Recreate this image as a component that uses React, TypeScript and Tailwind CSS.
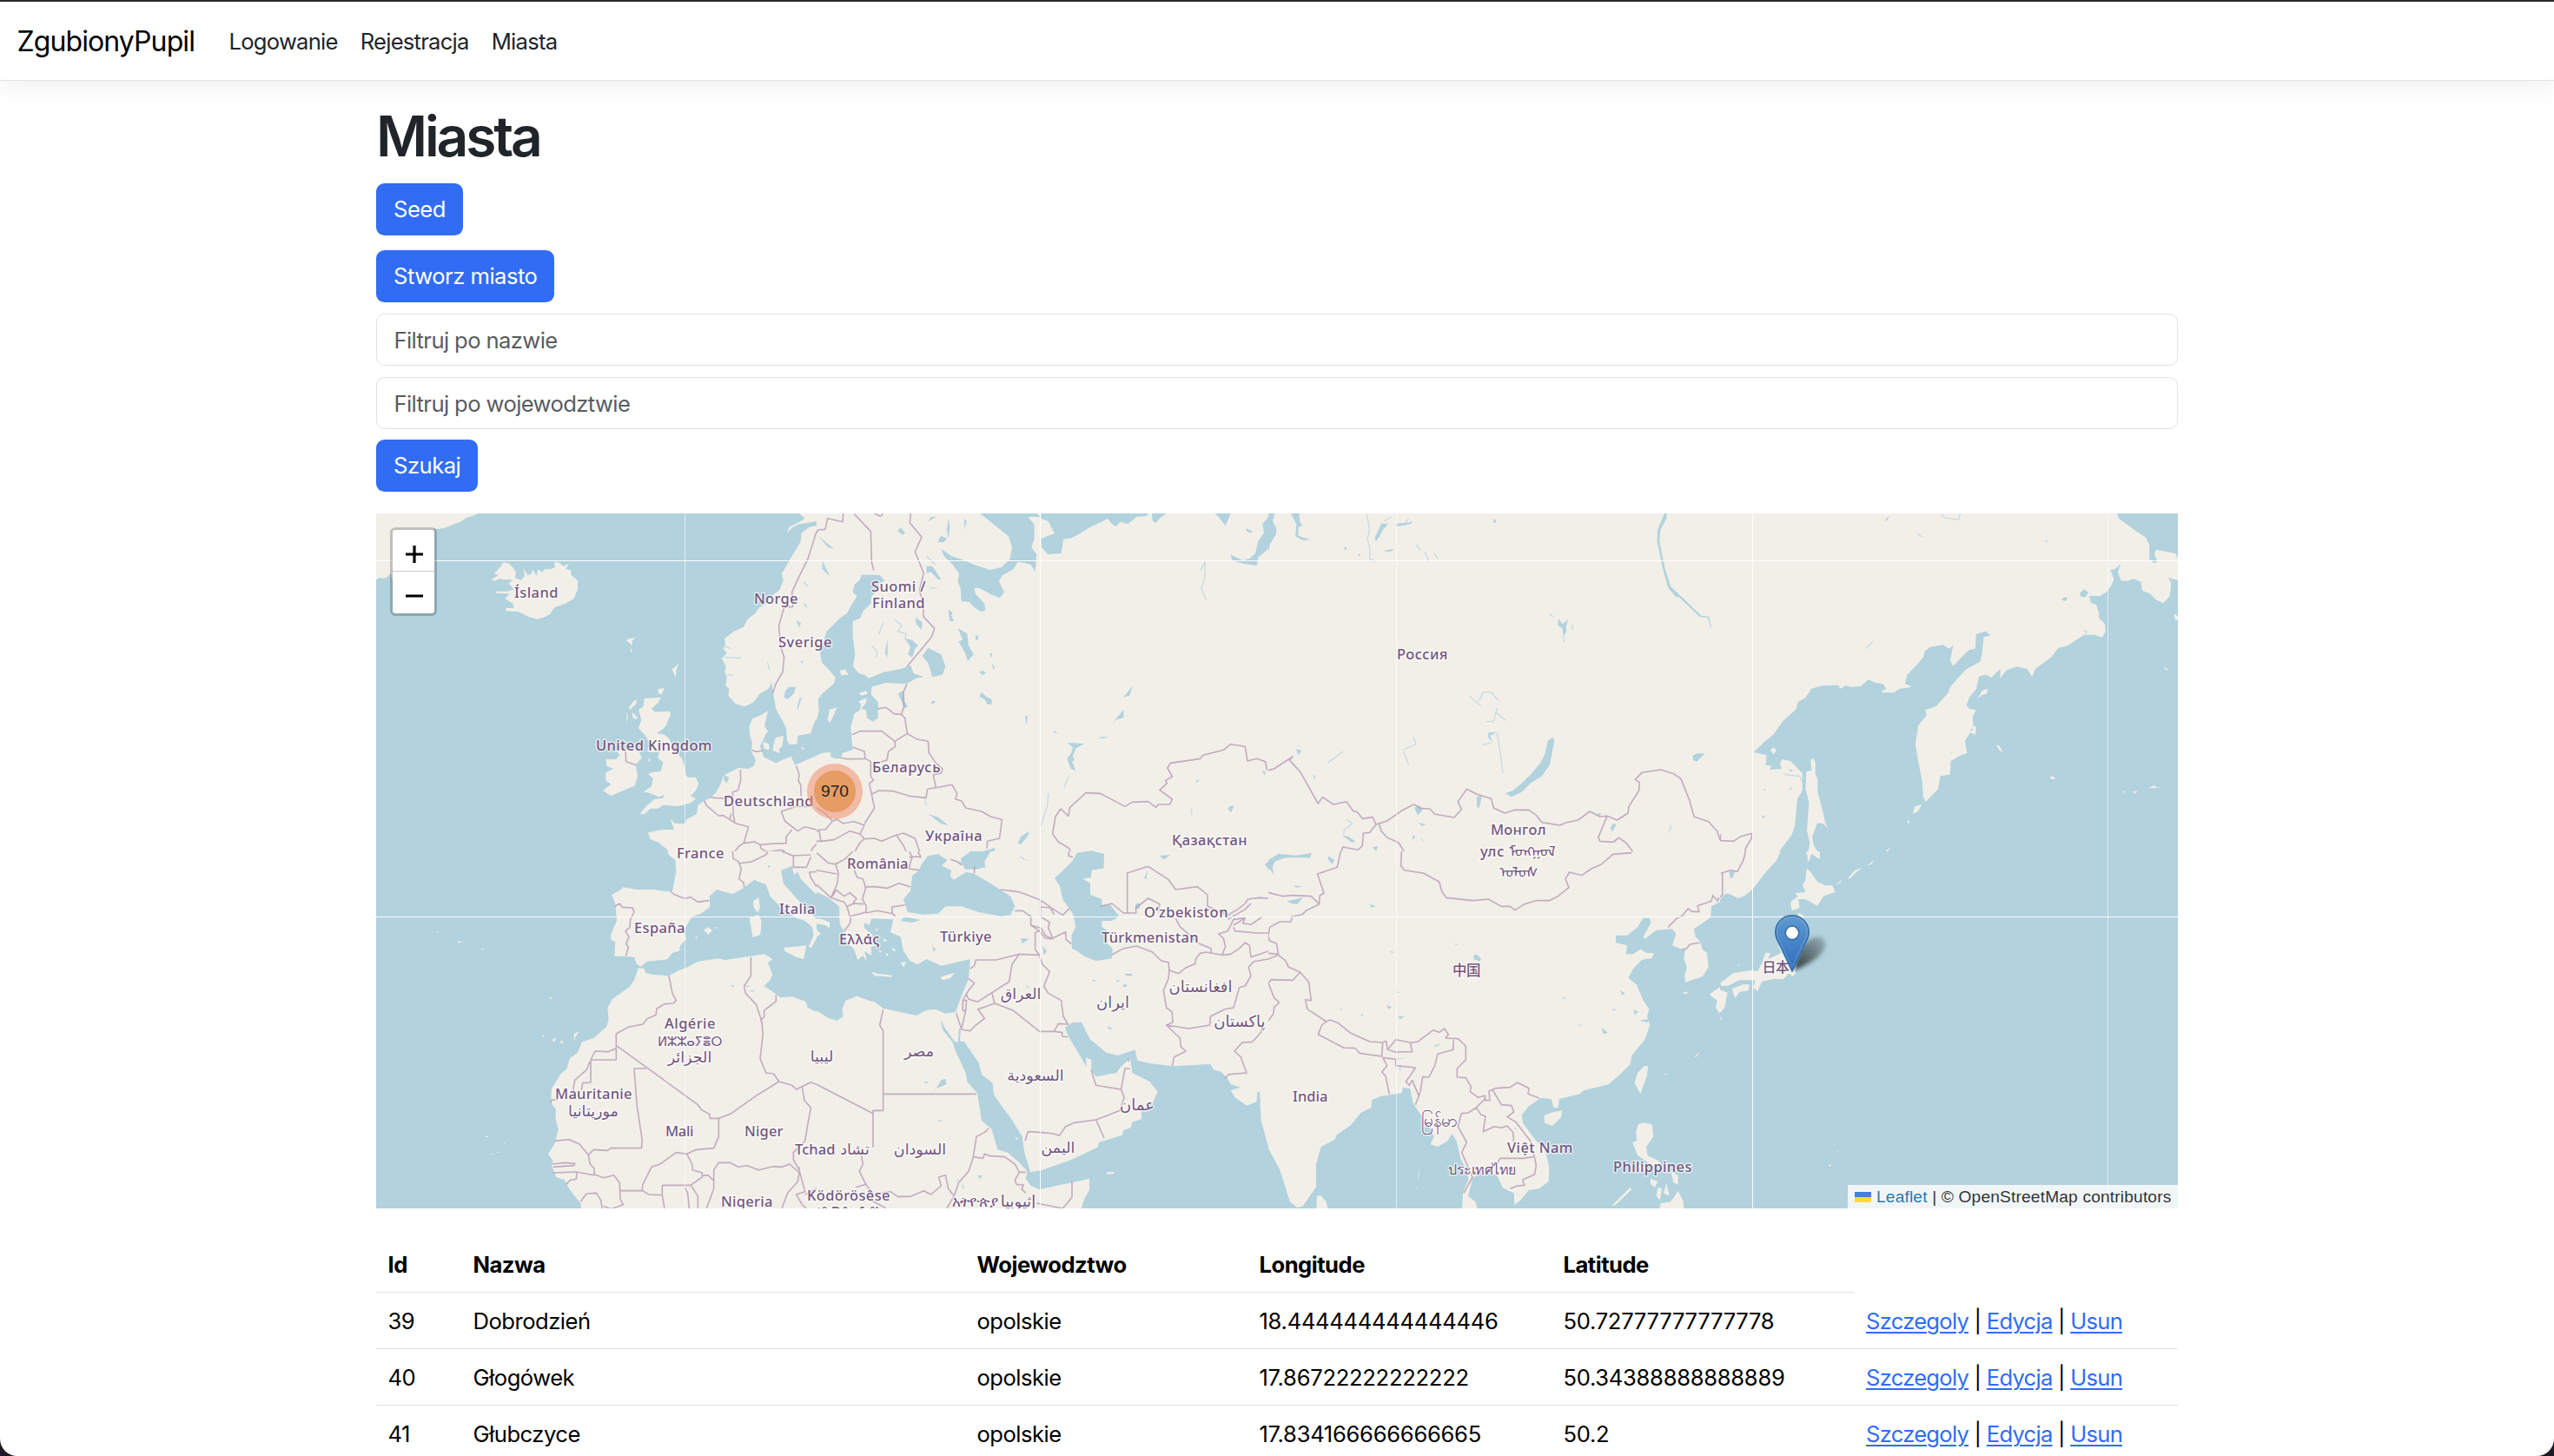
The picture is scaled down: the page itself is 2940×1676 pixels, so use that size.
import React from "react";

const SANS = "font-['Inter','Noto_Sans','Liberation_Sans',sans-serif]";

type Sector = {
  x: number;
  y: number;
  w: number;
  units: number;
  base: "land" | "sea";
  land?: string;
  sea?: string;
  islands?: string;
  rivers?: string;
  borders?: string;
};

// The map is drawn in eight sectors, each with its own local coordinate grid.
const sectors: Sector[] = [
  {
    x: 420, y: 580, w: 520, units: 1560, base: "sea",
    land: `M39 33H392L370 42 350 49 330 62 300 73 284 81 255 87 230 84 222 74 207 50 228 68 240 95 180 110 110 240 95 262 88 240 78 252 65 258 52 254 39 262Z
M437 262L462 246 447 240 470 215 478 202 495 205 505 212 522 235 518 255 538 264 552 250 548 222 562 246 574 242 580 226 592 248 598 226 612 236 620 226 640 226 656 220 655 200 672 203 685 215 705 207 693 225 712 229 712 245 735 265 735 295 722 328 692 345 655 357 640 380 618 392 595 398 565 390 530 372 485 370 488 360 515 360 512 345 485 328 500 310 450 308 455 302 492 302 515 295 497 275 512 262 480 262 465 258 450 266Z
M905 468L935 461 922 475 924 490 905 474ZM917 495L924 512 918 512ZM1085 548L1075 575 1074 600 1066 582 1060 572 1075 560ZM1012 640L1035 635 1025 658 1014 655Z
M965 672L1022 668 1012 688 990 706 1000 718 1055 716 1055 730 1040 765 1030 778 1008 792 1035 797 1052 812 1060 835 1078 860 1095 880 1105 910 1108 935 1115 944 1142 944 1153 965 1143 990 1125 1008 1143 1018 1125 1033 1080 1044 1030 1040 1012 1052 985 1052 965 1072 950 1070 975 1040 1000 1020 1030 1016 1034 1005 1015 1012 985 1000 963 994 990 975 995 948 978 932 1000 925 1022 925 1030 892 1012 878 1018 852 1000 858 975 855 985 830 970 802 945 775 955 745 945 712 962 700Z
M938 675L937 690 915 712 912 702 925 685ZM924 720L942 738 936 745 924 735ZM905 715L908 740 903 755ZM982 875L986 885 978 892Z
M868 852L900 846 945 850 956 878 935 900 942 940 932 974 905 985 850 1008 840 1002 823 990 850 968 832 955 832 928 858 915 835 905 832 882 868 882 880 868Z
M1560 75L1535 80 1508 100 1505 130 1488 160 1470 188 1455 215 1440 240 1445 265 1432 298 1400 322 1388 345 1362 358 1348 378 1322 398 1308 425 1275 440 1242 465 1245 485 1238 500 1250 515 1232 535 1247 560 1243 580 1250 600 1246 628 1258 640 1255 662 1280 690 1310 700 1340 687 1365 655 1395 638 1405 615 1410 655 1420 710 1440 745 1455 775 1458 815 1465 830 1492 830 1495 800 1540 793 1548 765 1560 740ZM1500 33H1560V60L1530 65 1500 70 1478 80 1458 100 1465 80 1500 62 1520 50Z
M1392 715L1370 728 1338 742 1327 770 1330 800 1338 825 1335 855 1350 885 1343 905 1325 915 1290 912 1258 928 1238 938 1228 970 1210 1000 1195 1015 1172 1025 1150 1040 1146 1072 1112 1088 1105 1105 1070 1103 1055 1088 1068 1125 1040 1125 1015 1127 978 1135 985 1158 1015 1170 1045 1195 1050 1205 1068 1222 1075 1260H1560V870L1530 882 1485 902 1472 872 1440 885 1420 895 1378 875 1365 838 1382 800 1392 785 1380 768Z
M1418 808L1446 800 1442 835 1430 848 1435 862 1408 852 1412 830ZM1375 820L1396 830 1396 850 1378 845ZM1508 838L1518 845 1510 850Z`,
    sea: `M1465 632L1488 632 1482 655 1460 675 1448 668 1452 645ZM1510 665L1495 710 1492 705 1500 675ZM1490 402L1506 412 1500 428ZM1504 542L1517 545 1507 550ZM1520 340L1528 360 1518 352ZM1240 935L1258 945 1250 965 1240 955Z`,
    rivers: `M1245 530L1300 532M1250 590L1275 592M1240 490L1265 500M1390 545L1398 575M1515 270L1530 285`,
    borders: `M1560 95L1530 190 1500 250 1475 305 1478 355 1448 357 1430 420 1435 490 1448 530 1443 580 1420 620 1408 655M900 852L902 890 937 902M1337 850L1350 856 1375 852M1297 918L1298 955 1288 990 1270 995 1272 1070 1277 1098M1172 1025L1180 1042 1222 1077 1238 1076 1280 1103 1325 1115 1308 1172M1195 1014L1235 1017 1255 1010 1272 1012M1265 1070L1260 1090 1270 1098M1490 905L1500 935 1497 955 1505 970 1507 1010M1540 1045L1490 1045 1438 1062 1450 1095 1495 1130 1520 1115 1560 1125M1308 1172L1292 1182 1270 1210 1270 1228 1290 1225 1295 1245 1335 1240 1385 1215 1408 1210M1308 1172L1345 1167 1365 1177 1400 1174 1455 1172 1455 1150 1475 1125M1365 1177L1368 1190 1390 1203 1440 1195 1478 1217 1540 1213 1545 1190 1560 1175M1478 1217L1483 1255 1525 1258 1535 1230M1300 1250L1310 1260`,
  },
  {
    x: 940, y: 580, w: 520, units: 1560, base: "land",
    sea: `M155 245L195 245 218 246 236 266 215 275 212 300 190 318 187 345 162 368 150 395 125 405 125 460 133 520 126 560 145 585 165 590 180 602 230 582 290 570 325 558 335 585 370 598 345 602 310 622 240 618 190 632 188 658 212 685 212 740 195 752 175 740 170 712 155 708 172 685 155 688 150 712 130 725 118 770 120 800 125 850 90 860 82 878 68 880 50 875 48 857 20 860 0 868V750L8 715 5 675 20 655 60 620 65 600 40 570 18 548 12 510 22 480 35 440 80 395 105 378 120 350 140 318 125 305 130 280 150 262Z
M565 33H760L775 45 730 45 752 72 752 120 742 150 760 175 755 235 740 210 720 205 695 200 680 225 640 248 630 268 648 305 632 325 600 312 565 292 545 290 548 310 580 345 583 368 568 372 545 358 528 340 500 335 497 290 488 270 492 240 470 210 440 180 430 155 465 180 510 195 550 212 600 228 640 218 668 190 675 150 663 112 610 70Z
M775 33V50L800 60 822 103 800 110 776 120 776 150 800 175 845 170 852 122 880 118 905 105 945 80 985 62 1005 50 1020 70 1035 78 1048 62 1075 70 1105 45 1140 42 1145 33ZM1158 33L1160 58 1172 66 1185 50 1207 33ZM1375 33L1388 45 1412 76 1430 33ZM1560 45L1540 70 1545 100 1525 130 1515 170 1495 190 1470 195 1430 175 1435 195 1475 207 1520 213 1525 185 1560 155Z
M385 497L430 520 445 560 435 590 400 598 385 550 365 525ZM488 430L520 448 525 490 542 520 522 543 515 520 490 475 505 470ZM282 655L300 645 302 680 315 698 305 707 296 690ZM570 650L585 665 605 675 605 692 590 692 580 675 562 665ZM562 580L575 575 584 584 572 592ZM395 685L405 678 410 685 400 692ZM340 392L365 408 362 435 345 415ZM380 215L400 215 430 260 420 262 395 235 380 240ZM395 45L415 45 385 60ZM455 50L460 80 455 120 450 90ZM430 110L450 120 440 132 418 132ZM510 50L518 60 510 90ZM305 465L330 470 350 490 340 500 330 530 315 520 325 495ZM245 465L245 530 236 515ZM455 365L470 375 465 385 475 405 460 405ZM548 455H558V470H550ZM600 515H606V528H602ZM605 550L615 565 612 575ZM720 735L728 730 725 765ZM290 80L305 100 300 108 280 95ZM5 110L60 155 40 150ZM20 195L45 250 20 225Z
M865 825L925 828 895 845 885 870 890 885 882 890 895 920 878 915 865 880 880 860 885 840ZM818 780L833 795 820 790ZM972 805L1010 806 985 810ZM1060 668L1092 628 1080 662ZM1020 760L1060 710 1060 738 1035 745ZM695 1172L705 1150 735 1130 728 1150 705 1176ZM385 1070L420 1082 455 1110 430 1105ZM700 1215L740 1235 710 1225ZM1425 1045L1442 1042 1432 1065 1420 1055ZM1308 960L1322 948 1315 962ZM1485 85L1505 95 1500 100 1485 95ZM1180 1215L1205 1210 1222 1215 1210 1235 1190 1225ZM1140 1260L1165 1230 1175 1240 1150 1260ZM1537 920L1550 925 1548 938Z
M845 1260L885 1232 900 1205 950 1198 993 1210 992 1260ZM355 1260L362 1240 385 1215 420 1210 455 1225 470 1260ZM470 1232L500 1240 510 1225 545 1208 617 1188 612 1202 590 1222 582 1260H500Z`,
    islands: `M38 745L45 710 70 703 60 728 45 757ZM145 682L175 670 168 690 150 690ZM145 655L170 645 178 655 158 662ZM80 575L100 572 110 590 85 592Z`,
    rivers: `M1325 230L1342 200 1340 260 1328 290 1345 330M870 940L855 980M800 1000L798 1040 785 1080 775 1110M375 1015L378 1045M1295 1050V1075M270 400L295 420 280 440 310 450 305 470M190 490L210 510 205 530M230 410L215 450M1550 895L1556 905M390 290L415 292M380 180L410 210`,
    borders: `M130 35L187 95 190 200 197 230M0 100L5 90 30 88 38 50 90 62 92 33M200 33L220 43 230 35M325 33L322 65 363 115 340 165 370 240 355 300 370 345 368 388 407 430 397 460 312 562M312 622L300 650 302 700 293 727M210 708L240 703 268 725 293 727 305 740 313 793M122 797L150 785 225 785 270 820 313 793M270 820L272 838 248 855 243 885 215 893M125 840L165 855 168 880M82 876L105 881 170 880 187 890 187 940 196 955 182 965 200 1050 165 1105M313 793L345 812 385 820 388 860 412 895 435 915 430 930 403 935 412 980M190 1003L215 990 265 992 300 1003 325 1010 378 1015 383 985 412 980 468 970 485 1000 480 1020 500 1025 515 1050 570 1062 600 1080 640 1090 632 1155 590 1165 588 1190M0 1050L25 1065 55 1095 72 1090 90 1103 130 1097 165 1110 150 1140 115 1130 60 1160 15 1165 8 1125 30 1125 55 1095M150 1140L165 1157 200 1155 225 1165 270 1145 300 1137 340 1155 350 1185 363 1220 335 1222 320 1260M275 1143L300 1180 318 1220M165 1157L150 1170 122 1218M0 1215L40 1245 90 1240M0 1130H8M0 1165L15 1165M60 1245L70 1260M460 1228L500 1245M545 1250V1260M883 1222L873 1190 835 1167 815 1140 825 1080 843 1053 870 1078 875 1048 930 998 980 1000 1065 1045 1090 1030 1145 1028 1172 1048 1180 1038 1220 1038 1228 1020 1185 988 1210 965 1205 955 1228 942 1212 912 1222 895 1325 880 1335 868 1405 850 1430 830 1480 838 1488 888 1520 880 1550 890 1555 920M1115 1258L1145 1254 1160 1260M872 1222L870 1260`,
  },
  {
    x: 1460, y: 580, w: 520, units: 1560, base: "land",
    sea: `M0 33H22L15 60 28 85 27 105 5 140 0 165ZM78 33H107L108 60 118 75 104 80 103 108 118 116 145 122 120 127 94 112 97 70ZM390 68L415 68 395 90 385 110 372 130 368 118ZM440 68L480 66 500 60 490 70 445 78ZM395 162L435 155 420 166ZM776 55L783 52 787 64 780 67ZM262 150H270V160H264ZM308 173L320 175 314 181Z
M818 1000L845 990 875 965 905 935 940 895 955 865 965 820 982 806 988 818 976 880 972 900 945 940 905 965 875 995 840 1012ZM720 1010L738 1008 728 1050 720 1048ZM505 1048L525 1045 532 1060 515 1075ZM1180 1120L1192 1103 1202 1108 1188 1132ZM1465 870L1480 862 1508 862 1480 890 1468 885ZM255 1145L275 1148 300 1165 290 1170ZM360 1185L378 1182 372 1200ZM95 848L115 850 105 868ZM155 935L162 940 160 955ZM518 1100L545 1108 530 1112ZM525 1150L540 1170 530 1162ZM500 1142L508 1150 498 1162ZM1002 395L1015 415 1035 400 1028 425 1030 440 1020 455 1015 430 1000 420ZM760 790L790 788 765 800 775 822 760 808ZM0 1225L35 1205 95 1212 150 1206 145 1222 60 1220 25 1232 5 1260H0ZM188 1212L215 1215 228 1240 210 1235ZM1135 1068L1152 1070 1140 1078ZM1192 1165L1206 1158 1198 1170Z
M1368 33L1344 90 1343 130 1361 220 1381 290 1408 322 1418 322 1490 390 1518 393 1528 430 1530 428 1522 389 1495 386 1418 312 1389 285 1369 220 1351 130 1354 90 1375 50 1376 33Z`,
    rivers: `M400 60L425 45M465 850L510 830 500 805M467 855L485 900M205 895L258 855M270 1090L290 1105 262 1125 260 1145M695 665L720 685 735 700M728 680L742 650 770 650 795 680M790 705L778 750 752 752M785 720L820 748M790 790L800 850 805 890 810 930M740 832L768 825M1050 415V435M970 380L985 390M1020 440V480M340 35L350 90 342 120 352 160 350 190 372 200M470 70L485 50M510 140L525 160M540 165L555 200M572 170L585 190M1390 1110L1385 1135`,
    borders: `M0 920L20 915 85 872 73 885 110 925 172 1035 187 1013 225 1038 270 1028 292 1060 308 1065 325 1087 360 1082 372 1107 350 1135 328 1137 325 1180 310 1195 257 1185 238 1255M372 1107L410 1095 460 1060 503 1038 530 1052 558 1053 575 1072 642 1083 667 1055 655 1028 685 985 720 1003 770 1018 778 1050 817 1068 850 1057 900 1057 925 1075 945 1100 1007 1110 1030 1100 1070 1092 1110 1062 1145 1080 1170 1078 1205 1092 1242 1068 1245 1045 1280 990 1282 962 1267 952 1290 928 1355 918 1400 932 1425 950 1455 1025 1470 1080 1520 1097 1550 1130 1560 1160M1170 1078L1140 1150 1145 1165 1190 1168 1210 1153 1235 1170 1258 1200 1250 1208 1190 1213 1150 1247 1110 1260M382 1103L390 1130 410 1152 450 1170 470 1203 458 1250 462 1262`,
  },
  {
    x: 1980, y: 580, w: 540, units: 1566, base: "sea",
    land: `M0 33H1325L1332 52 1360 72 1390 95 1420 115 1433 140 1433 190 1448 205 1460 200 1450 175 1455 158 1505 168 1520 172 1530 192V264L1495 255 1505 270 1505 290 1500 320 1480 343 1455 330 1435 310 1410 300 1405 270 1380 258 1360 266 1338 265 1328 235 1338 208 1318 225 1303 228 1315 260 1308 280 1292 302 1270 318 1232 318 1238 342 1256 348 1265 378 1265 395 1285 415 1287 440 1276 461 1250 452 1215 452 1160 490 1130 497 1105 530 1052 570 1042 597 1025 570 990 562 955 575 935 603 936 570 905 600 890 590 865 595 855 640 832 668 823 695 832 708 855 712 843 735 845 765 855 770 852 797 835 790 817 820 825 860 800 870 770 888 768 935 735 940 728 985 685 1030 678 1010 675 960 660 880 652 830 662 765 690 730 685 712 720 700 760 655 770 630 820 572 868 545 875 515 880 460 903 455 888 440 855 450 852 500 830 505 778 560 768 540 772 522 778 488 765 500 745 487 700 495 682 510 680 528 655 558 625 590 617 620 640 632 600 638 580 652 540 652 540 645 555 640 545 622 520 618 495 607 470 630 440 632 418 628 402 638 395 626 340 628 305 638 285 670 260 685 253 710 210 750 180 795 145 825 112 858 155 868 153 902 172 905 165 918 205 915 200 895 208 882 235 888 275 930 275 990 258 1020 250 1110 240 1142 205 1190 165 1260H0Z
M303 885L312 878 318 892 318 930 326 950 325 990 345 1070 352 1105 362 1122 345 1105 325 1102 308 1150 313 1180 333 1212 333 1228 305 1208 295 1238 290 1225 300 1170 290 1130 297 1030 285 985 288 925 305 920ZM860 672L875 645 892 638 892 655 875 660ZM922 832L932 835 945 860 932 850ZM1100 942L1115 942 1120 950 1105 950ZM643 1070L650 1045 675 1038 660 1062ZM1515 378L1530 390V400L1520 402ZM168 850L180 840 188 852 178 865ZM1480 562L1500 575 1488 573ZM965 855L982 870ZM628 1090L634 1100 626 1105ZM550 1202L570 1185 560 1200ZM490 1252L515 1232 505 1248ZM1345 990L1352 995 1345 998ZM1375 995L1395 990 1385 1000ZM1430 982L1450 972 1455 978 1475 981ZM1290 988L1284 990Z`,
    sea: `M1140 328L1152 322 1160 325 1155 335 1145 334ZM1200 310L1215 295 1230 305 1220 322 1205 320ZM1215 435L1225 440 1222 450ZM145 985L153 988 147 992ZM548 60L565 40 560 55ZM1084 127L1094 126 1090 133ZM835 780L848 775 840 785ZM770 855L778 858 772 860ZM230 985L240 978 238 988ZM140 1075L152 1080 142 1085ZM230 915L245 920 235 925Z`,
    rivers: `M488 500L510 475M215 935L265 940 275 960M660 102L675 115M740 35L750 48 795 55 803 33`,
    borders: `M0 1140L2 1163 45 1165 70 1148 107 1138 105 1155 85 1190 78 1230 65 1260`,
  },
  {
    x: 420, y: 980, w: 520, units: 1560, base: "sea",
    land: `M1045 0L1052 15 1072 30 1075 70 1062 138 1035 138 1000 132 940 132 892 124 880 135 852 150 865 180 870 240 850 285 850 305 865 312 862 362 905 362 930 365 938 388 952 398 975 380 1045 373 1062 350 1085 345 1090 325 1110 302 1102 272 1130 225 1160 215 1192 192 1190 155 1215 132 1270 148 1310 125 1345 98 1385 115 1400 155 1432 188 1490 230 1520 240 1545 262 1550 290 1532 328 1542 333 1560 300V235L1520 195 1480 150 1445 110 1438 65 1475 50 1482 82 1495 70 1505 95 1560 150V0Z
M1447 332L1500 328 1525 325 1515 372 1490 365 1450 345ZM1328 230L1358 218 1370 240 1366 288 1340 297 1335 270ZM1342 170L1360 160 1365 195 1357 212 1342 192ZM1170 272L1185 262 1200 273 1187 287ZM1208 262L1222 263 1215 267ZM1140 300L1147 292V302ZM635 503L650 507 640 510ZM722 655L722 630 740 622 728 640ZM672 655L686 655 680 665ZM645 652L662 642 655 658ZM615 630L620 640 614 640ZM320 310L340 313 322 316ZM400 335L420 338 402 340ZM250 278H255V282H250ZM415 980L427 987 418 987ZM478 1005L486 1010 480 1010ZM457 1036L465 1040 458 1042ZM430 1043H442V1047Z
M945 402L965 405 970 420 990 425 1050 430 1085 410 1110 402 1150 380 1220 370 1245 375 1310 365 1380 355 1408 372 1392 385 1408 425 1400 445 1378 465 1410 485 1435 505 1475 502 1522 518 1530 540 1560 555V1260H750L745 1215 705 1165 690 1135 660 1125 645 1085 650 1070 633 1045 655 1010 668 960 658 920 660 890 642 868 645 820 675 770 698 750 708 715 735 695 750 658 790 645 835 605 842 580 838 540 855 510 915 467 930 445Z`,
    sea: `M660 1142L675 1140 668 1150ZM1390 48L1400 50 1395 58ZM1265 462H1275V467H1267ZM1315 462L1335 466 1320 468ZM1330 480H1345V484H1330ZM1495 1090L1503 1088 1503 1102ZM1495 398L1505 405 1498 405Z`,
    borders: `M862 190L880 180 890 193 925 195 930 210 917 235 915 262 900 275 912 295 902 320 910 330 902 360M1055 138L1070 150 1105 163 1125 158 1150 175 1188 170M1270 0L1272 25 1290 35 1300 60 1292 95 1308 108 1310 125M1290 42L1335 36 1385 12 1392 0M1440 0L1478 15 1540 12M1480 15V55L1525 55 1540 20M1560 70L1535 72 1540 90 1560 122M1050 430L1062 490 1075 515 1065 525 1035 527 1008 543 1005 565 975 578 960 597 910 607 868 630V720H780M868 680L840 692 795 690 780 720V798L752 800 748 825M778 725L765 755 725 790 718 830M665 858L645 858 642 870M868 670L1150 875 1162 892 1190 908 1192 922 1222 922 1262 907 1350 845 1430 795 1475 808 1490 822 1510 812 1540 797 1560 805M972 750H930L940 880 958 1000 955 1025H850L838 1033 790 1030 772 1048 740 1010 705 995 655 1000M1333 365V430L1310 465 1315 490 1352 530 1370 585 1375 630 1365 715 1385 765 1412 768 1430 795M1420 495V518L1378 550 1380 570 1365 585M1222 922V985L1205 1025 1145 1030 1112 1045 1130 1080 1132 1100 1165 1110V1125L1125 1153 1027 1153V1187L980 1185 957 1170 960 1150 990 1090 1020 1080 1075 1040 1112 1045M772 1048L778 1080 792 1095V1118L730 1107 648 1110M648 1080L690 1075 725 1078 722 1085 650 1090M792 1115L825 1127 860 1118 880 1145 882 1200 892 1220 850 1235 825 1225M882 1172L957 1172M732 1110L730 1132 710 1135 695 1150M745 1210L765 1182 800 1180 815 1205 820 1235M1180 1233L1205 1165 1205 1100 1222 1075 1260 1075 1290 1090 1320 1085 1360 1100 1410 1088 1440 1090 1467 1080 1500 1110 1495 1140 1460 1180 1440 1233M1165 1120L1185 1118 1202 1135M1027 1187L1035 1233M1105 1160L1115 1180 1120 1233M1127 1155L1150 1190V1233M1510 812L1518 860 1540 885 1530 940 1520 1000 1480 1040 1480 1065 1500 1100 1520 1175 1490 1185 1510 1220 1525 1233M1560 1165L1520 1185`,
  },
  {
    x: 940, y: 980, w: 520, units: 1560, base: "land",
    sea: `M0 140L40 160 78 190 80 250 98 285 100 310 130 340 142 375 160 360 175 382 165 345 190 360 188 330 205 325 190 300 195 290 165 265 165 245 182 255 190 232 265 235 255 280 290 295 300 345 325 380 350 390 380 372 430 395 490 382 530 372 525 440 500 500 480 555 445 560 410 545 375 550 345 567 230 542 200 520 180 515 140 500 100 515 88 545 92 570 70 585 40 575 0 550V295L15 285 0 270V250L30 255 45 265 45 245 20 235 0 232Z
M290 240L305 225 360 237 330 245ZM362 45L385 15 420 10 452 30 432 50 465 65 462 88 475 98 515 72 540 75 600 110 630 130 670 155 685 190 670 220 635 224 560 210 500 190 445 190 420 215 370 218 315 210 300 165 325 135 330 85 355 65ZM460 28L500 38 498 25 525 5 530 0H600L580 35 583 55 550 62 512 62 505 45 480 35Z
M845 72L882 35 900 5 945 -2 993 8 992 58 950 65 948 90 920 95 945 110 945 150 985 165 985 185 1015 185 1045 225 1020 240 985 240 985 260 1005 275 1005 320 1022 335 1020 370 965 378 930 365 900 345 882 335 880 290 895 260 885 215 870 195 850 165 840 120 822 92Z
M428 580L440 605 475 655 488 660 492 612 498 612 495 655 510 658 560 730 570 770 608 800 612 840 640 880 670 920 710 985 718 1040 730 1080 738 1108 780 1100 880 1065 970 1022 975 1005 1055 980 1060 962 1085 955 1090 935 1122 925 1122 895 1160 870 1178 830 1150 795 1090 765 1083 715 1050 745 1035 765 965 778 948 755 950 720 930 712 932 745 915 715 870 640 858 608 885 590 915 590 945 650 965 665 1000 695 1040 705 1070 695 1100 685 1108 722 1150 732 1230 742 1360 735 1372 755 1395 760 1420 785 1430 805 1465 815 1430 825 1445 850 1485 878 1520 865 1522 830 1530 830 1535 930 1560 1020V1260H905L925 1200 942 1170V1130L900 1140 850 1150 770 1168 740 1155 722 1130 728 1105 700 1075 660 1040 625 1030 605 960 570 930 555 835 520 795 515 765 480 690 470 660 435 615Z
M1103 180L1120 180 1112 200 1100 195ZM1143 65L1138 98 1132 92ZM1185 15L1222 12 1200 28ZM705 300L735 302 710 318ZM780 325L795 345 785 358ZM1065 423H1090V430H1068ZM1060 460H1070V468H1058ZM1035 445H1045V450H1035ZM952 443L968 447 955 450ZM722 455L735 475 728 470ZM1005 600L1022 615 1010 615ZM555 1118L572 1120 565 1132ZM430 790L445 785 448 805 410 820 398 840 425 800ZM372 795H385V800H375ZM400 325L412 340 403 345ZM1548 45L1560 35V60ZM500 1140L510 1165 505 1165ZM700 15L735 35 710 25ZM590 390L598 400ZM420 928H430V932H420Z`,
    islands: `M188 415L210 422 262 428 258 434 200 430ZM428 434L455 425 478 420 462 438 435 445ZM1000 1108L1030 1107 1025 1114 1005 1115ZM230 300L245 308 232 312ZM215 340L225 345 218 352ZM262 330L275 345 262 342ZM290 385L310 380 300 400ZM240 350L250 358 240 362ZM205 265L215 270 205 275ZM685 985L697 992 690 995Z`,
    rivers: `M490 1130L485 1140`,
    borders: `M0 5L40 40 65 45 100 25 125 0M165 123L200 122 245 127 285 110 325 123M65 40L75 75 72 110 50 160M0 65L70 78M0 115L50 160 78 170M130 65L140 90 160 95 170 125 158 165 172 190 170 210 115 225 105 190 130 180 162 182M78 170L95 175 105 190M55 155L68 133 95 155 115 143 138 163 125 180M118 228L115 250 95 275M170 213L210 205 262 215 260 192 305 185M262 215L272 225M320 20L345 18 360 20 350 0M320 0L330 20 318 60 355 65M462 28L485 35 502 48M545 52V75M635 132L700 140 740 155 772 168 805 190 820 218M685 205L712 205 740 225V255L770 275 755 280 755 340 770 358 700 355 620 375 550 375 545 395 530 405M700 355L675 390 665 450 555 520 525 510 515 490M525 440L545 455 525 480 505 515 505 550 515 550 500 615 530 620 550 600 580 577 557 545 615 525 605 487M615 525L680 550 770 622H820L835 595 865 597M820 622L848 625 848 638 868 642M482 558L500 612M505 515L518 515 515 550M770 362L780 390 805 415 785 465 800 490 845 515 852 570 870 600M773 168V225L805 245 800 262 815 300 860 278 862 305 880 320M775 192L810 195 850 220 872 198M740 255L775 265 790 290 815 303M770 275L790 300 815 303M872 0L870 15 885 20M230 547L218 600 230 620V895H195V1022M230 838H552M0 805L195 905M948 755L965 808 1052 822 1060 775 1065 750 1083 750M1078 715V725M1052 822L1062 850 1048 895 965 927 890 937 860 950 838 982 820 975 770 970 730 968 720 1000M965 927L993 990M595 957L580 970 552 985 540 1060 525 1105 490 1145 475 1190M540 1055L575 1060 580 1045 600 1052 650 1055 685 1080 700 1108 722 1108M700 1108L685 1135 690 1150 715 1152 708 1165 722 1180M760 1215L850 1233 882 1195V1140M155 1050L160 1080 148 1105 170 1150 135 1160M170 1150L195 1185 255 1175 280 1192 325 1192 370 1172 395 1185 430 1155 422 1125 445 1118 455 1165 475 1190 450 1233M250 1175L240 1185M180 1200L240 1233M980 190L1020 180 1060 213 1103 213V195L1145 162 1185 182 1180 210M1073 213V75L1145 52 1215 97 1240 132 1315 122 1350 150V190L1420 220 1455 200 1480 180 1490 165 1530 160 1560 162M1420 235L1480 200 1500 180M1240 232L1255 260 1320 318 1362 335V350M1020 357L1060 335 1105 327 1160 348 1190 378 1215 383 1218 410 1250 422 1275 402 1308 388 1310 370 1325 352 1345 348 1400 358 1412 330 1405 300 1388 285 1420 275 1440 235 1480 230 1472 248 1500 253 1540 225M1400 358L1430 355 1460 335 1480 315 1495 325 1500 365 1560 345M1560 372L1510 380 1492 400 1500 430 1480 465 1460 470 1440 540 1410 545 1360 570 1358 600 1285 612 1208 600 1230 590 1228 555 1208 540 1198 480 1215 440 1218 410M1208 600L1255 645 1258 675 1275 690 1235 710 1228 742M1540 600L1535 625 1505 658 1470 660 1443 690 1465 710 1485 765 1425 770 1408 785M1440 262L1445 275 1520 282 1560 282M1480 230L1440 255`,
  },
  {
    x: 1460, y: 980, w: 520, units: 1560, base: "sea",
    land: `M0 0H1560V175L1530 190 1528 228 1470 268 1475 295 1490 310 1500 340 1515 350 1520 400 1500 432 1440 452 1438 430 1445 400 1435 370 1440 340 1420 335 1395 325 1408 285 1395 268 1340 272 1300 303 1295 295 1322 245 1315 230 1295 230 1275 262 1240 290 1200 290 1200 315 1240 325 1235 355 1260 355 1285 338 1305 350 1332 352 1325 368 1290 375 1260 405 1243 437 1272 460 1295 515 1315 545 1308 570 1318 600 1300 650 1255 705 1250 735 1220 765 1175 805 1090 825 1075 838 1005 855 1000 885 985 885 978 855 940 852 900 880 875 910 880 940 925 1000 955 1025 970 1090 968 1140 935 1165 900 1170 870 1205 850 1220 848 1180 810 1162 790 1120 770 1110 725 1110 705 1130 690 1190 715 1210 722 1233V1260H668L672 1180 692 1130 680 1090 665 1065 650 1000 633 975 620 1000 585 1020 560 1012 572 985 560 955 520 900 500 870 490 820 465 815 460 835 390 845 358 858 355 885 320 902 285 945 235 980 230 995 182 1020 165 1080 165 1160 140 1195 120 1225 100 1230 75 1210 40 1100 0 1025Z
M165 1260L168 1190 180 1187 200 1210 212 1260ZM952 912L985 900 1015 895 1010 920 980 948 955 938ZM1312 742L1308 775 1285 838 1265 800 1275 765 1298 742ZM1278 942L1295 937 1325 942 1330 985 1305 1020 1310 1050 1350 1070 1360 1090 1325 1085 1290 1060 1275 1050 1258 1005 1272 1000 1270 965ZM1185 1225L1250 1160 1255 1168 1200 1220ZM1345 1260L1355 1215 1390 1210 1415 1172 1432 1205 1438 1260ZM1320 1130L1345 1140 1335 1160 1320 1150ZM1345 1160L1360 1165 1352 1205 1340 1190ZM1375 1145L1385 1190 1365 1180ZM1390 1105L1415 1120 1415 1150 1400 1145ZM1275 1085L1300 1090 1292 1110ZM1432 488L1450 484 1445 492 1435 492ZM1525 492L1560 468V560L1545 540 1550 515 1530 500ZM1500 505L1512 495ZM515 1135L522 1085 520 1120ZM508 1160H514V1165ZM1365 770L1380 765 1372 772ZM1470 712L1490 690 1480 708Z`,
    sea: `M708 360L720 356 735 372 730 380 710 372ZM0 30L35 8 95 14 150 6 145 22 60 22 25 34 15 50 18 80 5 60 0 65ZM205 15L228 30 222 45 208 30ZM65 172L120 160 100 182 80 180ZM90 118L120 122 95 125ZM352 182L372 190 355 195ZM420 345L438 348 425 350ZM645 317L655 322 647 324ZM408 530L426 538 415 545ZM448 568L470 570 455 580ZM320 562L330 565 320 568ZM1215 480L1232 490 1222 497ZM1262 545L1278 555 1265 565ZM1150 610L1172 625 1158 632ZM1188 543L1202 547 1192 550ZM1280 585L1315 578 1310 590ZM440 720L485 710 445 716ZM570 672L598 663 580 675ZM1015 505L1030 505 1022 510ZM247 542L260 547 252 548ZM440 483L455 487 445 489ZM783 935L792 940Z`,
    rivers: `M455 740L455 760M1070 598L1080 602M850 955L858 962`,
    borders: `M250 0L238 55 170 78 192 145 178 152 176 182 130 205 118 218 82 225 78 243 40 243 5 262 0 290 3 308 28 318 35 355 0 352M0 142L50 155 85 152 148 155 176 182M460 0L458 50 470 65 535 75 590 105 600 140 615 160 705 170 760 165 805 190 835 190 852 203 885 182 925 170 970 170 1000 155 1038 125 1026 95 1040 72 1083 83 1115 60 1150 45 1190 10 1255 5M1380 262L1410 232 1430 222 1450 197 1462 208 1488 208 1482 188 1530 172 1535 152 1552 172 1556 160M1430 338L1445 335 1455 322 1490 315M35 358L60 378 70 400 110 417 140 452 148 515 128 512 135 545 200 588 212 582 240 592 285 628 350 657 395 660 392 708 315 697 300 680 260 678 172 632 185 600 200 588M110 417L85 445 10 443 0 455 20 505 38 522 20 538 18 560 0 585M0 372L35 358M395 660L407 655 412 685 440 650 490 660 497 692 440 693 412 685M490 660L515 658 570 617 590 625 608 612 622 632 612 645 655 647 682 672V720L652 750V780L682 782 700 812 697 830 725 850 748 843 748 855 718 885 690 903 667 905 655 950 685 1005 668 1040 705 1125 675 1180M640 652L638 685 585 700 575 740 555 780 533 778 525 830 508 875M395 712L440 718V740L508 747 490 775 475 795 487 808 497 790 520 845M395 712L410 740 392 762 405 775 418 838M748 843L750 860 765 860 762 828 785 818 835 815 860 798 900 818 897 838 935 852M775 825L805 875 840 878 848 900 825 917 855 935 905 1000 920 1060 925 1085 920 1115 878 1135 885 1153 860 1155 835 1165M718 885L735 910 750 915 742 968 780 950 805 955 825 948 845 970 848 1005M792 1075L800 1060 880 1060 915 1055`,
  },
  {
    x: 1980, y: 980, w: 540, units: 1566, base: "sea",
    land: `M0 0H202L190 30 150 75 110 130 80 155 60 162 38 150 20 145 0 165ZM288 0H333L333 28 305 8 295 38ZM290 58L300 68 325 105 352 118 375 118 385 140 345 155 325 188 285 165 262 165 265 195 240 205 235 175 260 155 250 145 285 140 275 115 285 100ZM262 212L278 222 275 300 262 350 255 400 250 425 240 432 232 420 210 442 180 440 140 450 125 483 110 470 118 445 65 445 25 465 5 465 0 455 45 420 105 410 125 415 140 385 152 350 168 350 160 372 205 350 195 325 225 300 255 240ZM40 475L75 460 98 460 95 480 65 485 50 507ZM0 478L25 488 15 540 0 558ZM385 118L408 97 400 110ZM425 95L450 65 475 57 455 72 435 92ZM490 50L515 30 505 45ZM388 1038L397 1033 390 1040ZM362 1085L372 1080 368 1090ZM60 392L68 390 58 398ZM0 575L6 570 3 585Z`,
    sea: `M30 70L50 68 42 92 34 92Z`,
    borders: `M85 0L78 30 58 70 35 65 5 75 8 80V150L0 158`,
  },
];

const WATER = "#b2d2dd";
const LAND = "#f2efe9";

function SectorView({ s }: { s: Sector }) {
  return (
    <svg x={s.x} y={s.y} width={s.w} height={s.y === 580 ? 400 : 420} viewBox={`0 0 ${s.units} ${s.y === 580 ? 1200 : 1260}`} preserveAspectRatio="none">
      <rect width="1600" height="1300" fill={s.base === "sea" ? WATER : LAND} />
      {s.land && <path d={s.land} fill={LAND} />}
      {s.sea && <path d={s.sea} fill={WATER} />}
      {s.islands && <path d={s.islands} fill={LAND} />}
      {s.rivers && <path d={s.rivers} fill="none" stroke={WATER} strokeWidth="3.5" opacity=".75" />}
      {s.borders && <path d={s.borders} fill="none" stroke="#b59bb3" strokeWidth="4.8" strokeLinejoin="round" opacity=".8" />}
    </svg>
  );
}

// [text, left, baseline, width]
const labels: [string, number, number, number][] = [
  ["Ísland", 592, 687.5, 50],
  ["Norge", 868, 695, 50],
  ["Sverige", 896, 745, 61],
  ["Suomi /", 1003, 681, 62],
  ["Finland", 1004, 700, 60],
  ["United Kingdom", 686, 863.5, 133],
  ["Deutschland", 833, 927.5, 103],
  ["France", 779, 987.5, 54],
  ["Беларусь", 1004, 889, 78],
  ["Україна", 1065, 968, 65],
  ["Қазақстан", 1349, 973, 86],
  ["România", 975, 1000, 70],
  ["Россия", 1608, 759, 58],
  ["Монгол", 1716, 961, 63],
  ["улс", 1704, 986, 27],
  ["España", 730, 1074, 58],
  ["Italia", 897, 1052, 41],
  ["Ελλάς", 966, 1087, 46],
  ["Türkiye", 1082, 1084, 59],
  ["O‘zbekiston", 1317, 1056, 96],
  ["Türkmenistan", 1268, 1085, 111],
  ["Algérie", 765, 1184, 58],
  ["Mauritanie", 639, 1265, 88],
  ["Mali", 766, 1308, 32],
  ["Niger", 857, 1308, 44],
  ["Tchad", 915, 1329, 46],
  ["Nigeria", 830, 1389, 59],
  ["Ködörösêse", 929, 1382, 95],
  ["tî Bêafrîka", 940, 1401, 86],
  ["India", 1488, 1268, 40],
  ["Việt Nam", 1735, 1327, 75],
  ["Philippines", 1857, 1348.5, 90],
];

// [text, centre, baseline, size]; scripts whose glyphs join keep their natural width
const joinedLabels: [string, number, number, number][] = [
  ["ⵍⵣⵣⴰⵢⴻⵔ", 794, 1204, 15],
  ["الجزائر", 794, 1223, 17.5],
  ["موريتانيا", 683, 1285, 17.5],
  ["ليبيا", 946, 1222, 17.5],
  ["مصر", 1058, 1216, 17.5],
  ["العراق", 1175, 1150, 17.5],
  ["ایران", 1281, 1160, 18],
  ["السعودية", 1192, 1244, 17.5],
  ["عمان", 1309, 1278, 18],
  ["اليمن", 1218, 1327, 17.5],
  ["السودان", 1059, 1329, 17.5],
  ["تشاد", 984, 1329, 17.5],
  ["إثيوبيا", 1172, 1389, 18],
  ["አትዮጵያ", 1122, 1389, 17],
  ["افغانستان", 1382, 1142, 18],
  ["پاکستان", 1427, 1182, 18],
  ["中国", 1688, 1123, 16.5],
  ["日本", 2044, 1119, 16],
  ["မြန်မာ", 1657, 1297, 19],
  ["ประเทศไทย", 1706, 1352, 16],
  ["ᠮᠣᠩᠭᠣᠯ", 1764, 986, 17],
  ["ᠤᠯᠤᠰ", 1748, 1010, 17],
];

function WorldMap() {
  return (
    <svg className="block h-full w-full" viewBox="433 591 2074 800" preserveAspectRatio="none">
      {sectors.map((s) => (
        <SectorView key={`${s.x}-${s.y}`} s={s} />
      ))}
      <path d="M433 645.5H2507M433 1055.5H2507M1197.5 591V1391M2017.5 591V1391" stroke="#fff" strokeWidth="1" opacity=".95" />
      <path d="M788.5 591V1391M1607.5 591V1391M2426.5 591V1391" stroke="#fff" strokeWidth="1" opacity=".6" />
      <g
        fontFamily="'Noto Sans','DejaVu Sans','Noto Sans CJK SC',sans-serif"
        fontSize="16.5"
        fontWeight="500"
        fill="#745680"
        stroke="#fff"
        strokeOpacity=".65"
        strokeWidth="3"
        strokeLinejoin="round"
        paintOrder="stroke"
      >
        {labels.map(([t, x, y, w]) => (
          <text key={t} x={x} y={y} textLength={w}>
            {t}
          </text>
        ))}
        {joinedLabels.map(([t, x, y, size]) => (
          <text key={t} x={x} y={y} fontSize={size} textAnchor="middle">
            {t}
          </text>
        ))}
      </g>
    </svg>
  );
}

function Marker() {
  return (
    <svg className="absolute left-[1610px] top-[462px]" width="72" height="66" viewBox="0 0 45 41.25">
      <defs>
        <linearGradient id="pin" x1="0" y1="0" x2="0" y2="1">
          <stop offset="0" stopColor="#5e9bd0" />
          <stop offset="1" stopColor="#2e6bbf" />
        </linearGradient>
        <linearGradient id="shade" x1="0" y1="1" x2="1" y2="0">
          <stop offset="0" stopColor="#000" stopOpacity=".75" />
          <stop offset="1" stopColor="#000" stopOpacity=".15" />
        </linearGradient>
        <filter id="soft" x="-50%" y="-50%" width="200%" height="200%">
          <feGaussianBlur stdDeviation="1.7" />
        </filter>
      </defs>
      <path d="M13 40L18 26C23 16 33 13 36 19C38 26 28 35 13 40Z" fill="url(#shade)" filter="url(#soft)" />
      <path
        d="M12.5.5C5.8.5.5 6 .5 12.6c0 2.6.9 4.8 2.2 7.2L12.5 40.5l9.8-20.7c1.3-2.4 2.2-4.6 2.2-7.2C24.5 6 19.2.5 12.5.5Z"
        fill="url(#pin)"
        stroke="#3671a8"
      />
      <path
        d="M12.5 1.7C6.4 1.7 1.7 6.6 1.7 12.6c0 2.3.8 4.4 2.1 6.7L12.5 37.6l8.7-18.3c1.3-2.3 2.1-4.4 2.1-6.7C23.3 6.6 18.6 1.7 12.5 1.7Z"
        fill="none"
        stroke="#fff"
        strokeOpacity=".13"
      />
      <circle cx="12.5" cy="13" r="4.9" fill="#fff" stroke="#3974ab" strokeWidth="1.1" />
    </svg>
  );
}

const rows = [
  ["39", "Dobrodzień", "opolskie", "18.444444444444446", "50.72777777777778"],
  ["40", "Głogówek", "opolskie", "17.86722222222222", "50.34388888888889"],
  ["41", "Głubczyce", "opolskie", "17.834166666666665", "50.2"],
];

const columns = "grid grid-cols-[98px_580px_325px_350px_348px_373px]";

function Button({ children, className }: { children: React.ReactNode; className: string }) {
  return (
    <button className={`h-[60px] rounded-[9.6px] bg-[#316cf4] px-[20px] text-center whitespace-nowrap text-white ${className}`}>
      {children}
    </button>
  );
}

function Field({ placeholder }: { placeholder: string }) {
  return (
    <input
      placeholder={placeholder}
      className="block h-[60px] w-full rounded-[9.6px] border border-[#dee2e6] bg-white px-[19.5px] tracking-[-0.6px] placeholder:text-[#595c5f]"
    />
  );
}

function Link({ children }: { children: string }) {
  return (
    <a href="#" className="text-[#316cf4] underline decoration-2 underline-offset-[3px]">
      {children}
    </a>
  );
}

export default function App() {
  return (
    <div className="h-[1676px] w-[2940px] overflow-hidden bg-[#1f1b24]">
      <div className={`h-full overflow-hidden rounded-b-[20px] border-t-2 border-[#2b282e] bg-white text-[25.6px] leading-[38.4px] tracking-[-0.5px] text-[#212529] ${SANS}`}>
        <header className="flex h-[91px] items-center border-b border-[#dee2e6] pt-[3px] pl-[19.5px] shadow-[0_8px_26px_rgba(0,0,0,0.06)]">
          <a href="#" className="w-[244px] text-[32px] tracking-[-0.9px] text-black">ZgubionyPupil</a>
          <nav className="flex items-center gap-[26px] tracking-[-0.75px]">
            <a href="#">Logowanie</a>
            <a href="#">Rejestracja</a>
            <a href="#">Miasta</a>
          </nav>
        </header>

        <main className="mx-auto mt-[25px] w-[2074px]">
          <h1 className="h-[93px] text-[64px] font-semibold leading-[77px] tracking-[-3.1px]">Miasta</h1>
          <div className="flex flex-col items-start">
            <Button className="w-[100px]">Seed</Button>
            <Button className="mt-[17px] w-[205px]">Stworz miasto</Button>
          </div>
          <div className="mt-[13px] flex flex-col gap-[13px]">
            <Field placeholder="Filtruj po nazwie" />
            <Field placeholder="Filtruj po wojewodztwie" />
          </div>
          <Button className="mt-[12px] block w-[117px]">Szukaj</Button>

          <section className="relative mt-[25px] h-[800px] overflow-hidden">
            <WorldMap />
            <div className="absolute left-[16px] top-[16px] flex w-[54px] flex-col overflow-hidden rounded-[6.4px] border-[3px] border-black/20 bg-clip-padding text-black">
              <button className="flex h-[48px] items-center justify-center border-b border-[#ccc] bg-white" aria-label="+">
                <svg width="20" height="20" viewBox="0 0 20 20" stroke="currentColor" strokeWidth="3.2" className="mt-[8px] ml-[2px]">
                  <path d="M0 10H20M10 0V20" />
                </svg>
              </button>
              <button className="flex h-[48px] items-center justify-center bg-white" aria-label="−">
                <svg width="20" height="20" viewBox="0 0 20 20" stroke="currentColor" strokeWidth="3.2" className="mt-[8px] ml-[2px]">
                  <path d="M0 10H20" />
                </svg>
              </button>
            </div>
            <div className="absolute left-[496px] top-[288px] flex size-[64px] items-center justify-center rounded-full bg-[#f18f6d]/55">
              <div className="flex size-[48px] items-center justify-center rounded-full bg-[#e69c62] font-['Liberation_Sans',sans-serif] text-[19.2px] font-normal tracking-normal text-[#212529]">
                970
              </div>
            </div>
            <Marker />
            <div className="absolute bottom-0 right-0 flex h-[27px] w-[380px] items-center bg-white/80 pl-[8px] font-['Liberation_Sans',sans-serif] text-[19.2px] leading-[27px] tracking-[0.15px] whitespace-nowrap text-[#333]">
              <svg width="19" height="12" viewBox="0 0 19 12" className="mr-[6px]">
                <path fill="#4c7be1" d="M0 0H19V6H0Z" />
                <path fill="#ffd500" opacity=".8" d="M0 6H19V12H0Z" />
              </svg>
              <a href="#" className="text-[#2c79ad]">Leaflet</a>
              <span className="whitespace-pre"> | © OpenStreetMap contributors</span>
            </div>
          </section>

          <section className="mt-[32px] text-black">
            <div className={`${columns} h-[65px] font-bold leading-[65px]`}>
              {["Id", "Nazwa", "Wojewodztwo", "Longitude", "Latitude"].map((h) => (
                <div key={h} className="h-[65px] border-b border-[#dee2e6] px-[13.5px]">{h}</div>
              ))}
            </div>
            {rows.map((r) => (
              <div key={r[0]} className={`${columns} h-[65px] border-b border-[#dee2e6] leading-[65px]`}>
                {r.map((c, i) => (
                  <div key={i} className={i > 2 ? "px-[13.5px] tracking-[-0.3px]" : "px-[13.5px]"}>{c}</div>
                ))}
                <div className="px-[14px] tracking-[-0.75px] whitespace-nowrap">
                  <Link>Szczegoly</Link> | <Link>Edycja</Link> | <Link>Usun</Link>
                </div>
              </div>
            ))}
          </section>
        </main>
      </div>
    </div>
  );
}
